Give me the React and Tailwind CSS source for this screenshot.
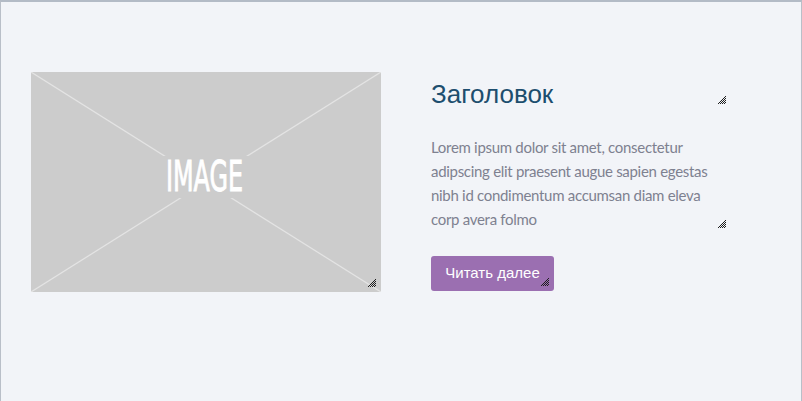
const gripCells = [];
for (let y = 0; y < 8; y++) {
  for (let x = 0; x < 8; x++) {
    if (x + y >= 7 && (x + y) % 2 === 1) gripCells.push([x, y]);
  }
}

// small hatched resize grip in the bottom-right corner
function Grip() {
  return (
    <svg width="8" height="8" viewBox="0 0 8 8" className="absolute right-[5px] bottom-[5px] block" shapeRendering="crispEdges">
      {gripCells.map(([x, y]) => (
        <rect key={`${x}-${y}`} x={x} y={y} width="1" height="1" fill="#1f1f1f" />
      ))}
    </svg>
  );
}

export default function App() {
  return (
    <div className="min-h-[401px] bg-[#f2f4f8] border-t-2 border-t-[#b3bbc6] border-x border-x-[#b9bfc8] pt-[70px] pl-[30px] flex items-start gap-[50px]">
      {/* Placeholder image */}
      <div className="relative w-[350px] h-[220px] shrink-0 bg-[#cccccc]">
        <svg width="350" height="220" viewBox="0 0 350 220" className="block">
          <line x1="0" y1="0" x2="350" y2="220" stroke="#e4e4e4" strokeWidth="1.2" />
          <line x1="350" y1="0" x2="0" y2="220" stroke="#e4e4e4" strokeWidth="1.2" />
          <rect x="129" y="84" width="92" height="42" fill="#cccccc" />
          <text
            x="135"
            y="119"
            fontFamily="'DejaVu Sans Condensed', 'Liberation Sans', sans-serif"
            fontSize="42"
            fill="#ffffff"
            stroke="#ffffff"
            strokeWidth="0.9"
            textLength="77"
            lengthAdjust="spacingAndGlyphs"
          >
            IMAGE
          </text>
        </svg>
        <Grip />
      </div>

      {/* Text column */}
      <div className="w-[300px] flex flex-col items-start">
        <h2 className="relative w-full h-[30px] mt-[7px] text-[26px] leading-[30px] text-[#1d4e6e] font-['Liberation_Sans',Arial,sans-serif]">
          Заголовок
          <Grip />
        </h2>
        <p className="relative w-full mt-[26px] pb-[2px] text-[15px] leading-[24px] tracking-[-0.3px] whitespace-nowrap text-[#7e8190] font-['Lato','Liberation_Sans',sans-serif]">
          Lorem ipsum dolor sit amet, consectetur
          <br />
          adipscing elit praesent augue sapien egestas
          <br />
          nibh id condimentum accumsan diam eleva
          <br />
          corp avera folmo
          <Grip />
        </p>
        <div className="relative mt-[23px] w-[123px] h-[35px] flex items-center justify-center rounded-[3px] bg-[#9b6fb1] text-white text-[15px] font-['Liberation_Sans',Arial,sans-serif]">
          Читать далее
          <Grip />
        </div>
      </div>
    </div>
  );
}
